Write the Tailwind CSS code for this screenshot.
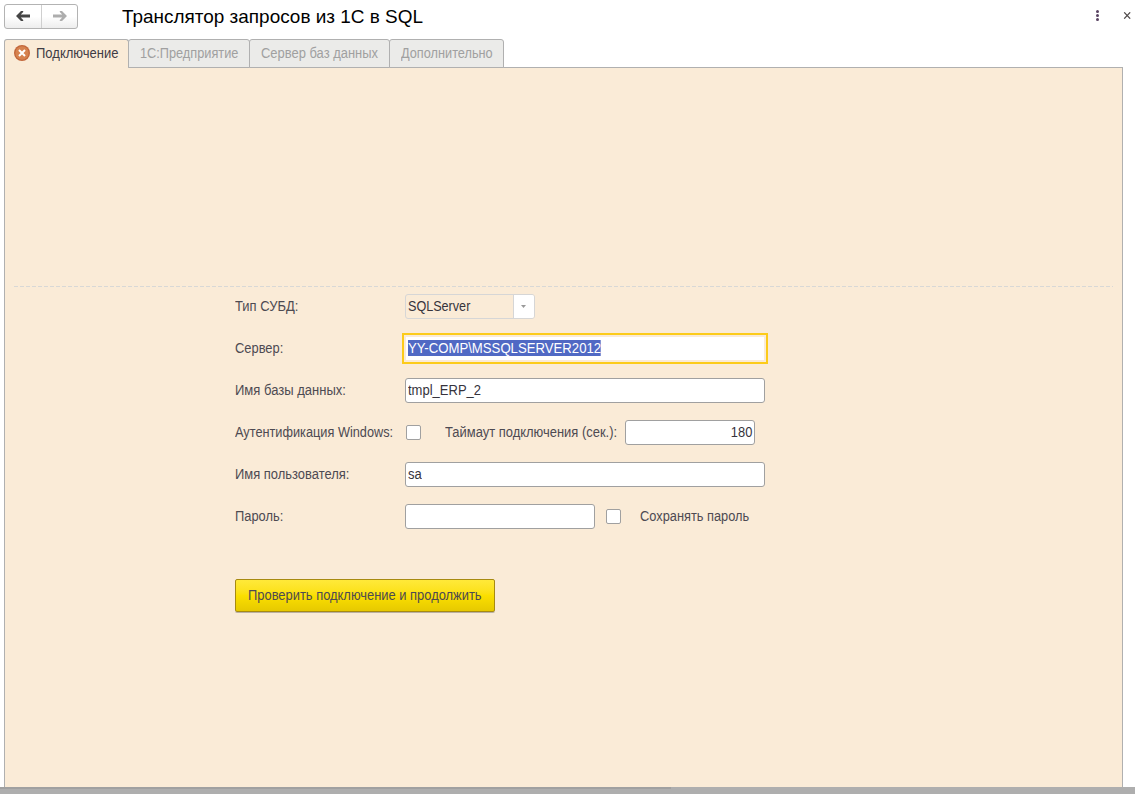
<!DOCTYPE html>
<html lang="ru">
<head>
<meta charset="utf-8">
<title>Транслятор запросов из 1С в SQL</title>
<script src="https://cdn.jsdelivr.net/npm/@tailwindcss/browser@4"></script>
</head>
<body class="h-[794px] w-[1135px] overflow-hidden bg-white font-['Liberation_Sans',Arial,sans-serif] text-[14px] leading-[17px] text-[#4d4a52] whitespace-nowrap flex flex-col">
<header class="h-[39px] shrink-0 flex items-start pl-1 pt-1">
  <div class="flex h-[25px] w-[74px] rounded-[3px] border border-[#b3b3b3] bg-linear-to-b from-white from-50% to-[#ededed]">
    <button class="flex w-[37px] items-center justify-center border-r border-[#cfcfcf]"><svg class="mb-px" width="14" height="10" viewBox="0 0 14 10" fill="#454545"><path d="M0 5 5 0H7.2V1L4.8 3.5H14V6.5H4.8L7.2 9V10H5Z"/></svg></button>
    <button class="flex flex-1 items-center justify-center"><svg class="mb-px" width="14" height="10" viewBox="0 0 14 10" fill="#adadad"><path d="M14 5 9 0H6.8V1L9.2 3.5H0V6.5H9.2L6.8 9V10H9Z"/></svg></button>
  </div>
  <h1 class="ml-[44px] mt-[1px] w-[320px] text-[19px] leading-[24px] text-black"><span class="inline-block origin-left scale-x-[.997]">Транслятор запросов из 1С в SQL</span></h1>
  <svg class="ml-auto mt-[6px]" width="4" height="12" viewBox="0 0 4 12" fill="#594362"><circle cx="2.5" cy="1.5" r="1.5"/><circle cx="2.5" cy="5.5" r="1.5"/><circle cx="2.5" cy="9.5" r="1.5"/></svg>
  <svg class="ml-[24px] mr-[4px] mt-[8px]" width="8" height="7" viewBox="0 0 8 7" stroke="#514c4c" stroke-width="1.2"><path d="M1.2.3 7.2 6.7M7.2.3 1.2 6.7"/></svg>
</header>
<nav class="relative z-10 -mb-px ml-1 flex h-[29px] shrink-0 text-[#a0a0a0]">
  <div class="flex w-[125px] items-center rounded-t-[3px] border border-b-0 border-[#b0b0b0] bg-[#faebd7] pb-px pl-[9px] text-[#3f3c45]">
    <svg class="mr-[6px] mb-px shrink-0" width="16" height="16" viewBox="0 0 16 16"><circle cx="8" cy="8" r="8" fill="#c2663a"/><circle cx="8" cy="8" r="6.7" fill="#d6824f"/><path d="M5 5 11 11M11 5 5 11" stroke="#fff" stroke-width="2"/></svg>
    <span class="origin-left scale-x-[.93]">Подключение</span>
  </div>
  <div class="-ml-px flex w-[122px] items-center rounded-t-[3px] border border-[#b0b0b0] bg-[#ebebe9] pl-[11px]"><span class="origin-left scale-x-[.91]">1С:Предприятие</span></div>
  <div class="-ml-px flex w-[141px] items-center rounded-t-[3px] border border-[#b0b0b0] bg-[#ebebe9] pl-[11px]"><span class="origin-left scale-x-[.925]">Сервер баз данных</span></div>
  <div class="-ml-px flex w-[115px] items-center rounded-t-[3px] border border-[#b0b0b0] bg-[#ebebe9] pl-[11px]"><span class="origin-left scale-x-[.91]">Дополнительно</span></div>
</nav>
<main class="ml-1 flex h-[720px] w-[1119px] shrink-0 flex-col border border-b-0 border-[#b0b0b0] bg-[#faebd7]">
  <svg class="ml-[9px] mt-[218px] shrink-0" width="1099" height="1"><path d="M0 .5H1099" stroke="#d8d8d6" stroke-dasharray="4 2"/></svg>
  <form class="ml-[230px] mt-[7px] flex flex-col gap-[17px]">
    <div class="flex h-[25px] items-center">
      <label class="w-[170px]"><span class="inline-block origin-left scale-x-[.926]">Тип СУБД:</span></label>
      <div class="flex h-[25px] w-[130px] items-center overflow-hidden rounded-[3px] border border-[#d6d6d6] pl-[2px] text-[#36333c]"><div class="flex-1"><span class="inline-block origin-left scale-x-[.9]">SQLServer</span></div>
        <div class="flex h-full w-[21px] items-center justify-center border-l border-[#d6d6d6] bg-white"><svg class="mr-px" width="5" height="3"><path d="M0 0H5L2.5 3Z" fill="#999"/></svg></div></div>
    </div>
    <div class="flex h-[25px] items-center">
      <label class="w-[167px]"><span class="inline-block origin-left scale-x-[.92]">Сервер:</span></label>
      <div class="-my-[3px] h-[31px] w-[366px] border-2 border-[#fccb1a] p-[2px]"><div class="flex h-full items-center bg-white pl-[2px]"><span class="mb-px h-[16px] origin-left scale-x-[.94] bg-[#5069c4] leading-[16px] text-white">YY-COMP\MSSQLSERVER2012</span></div></div>
    </div>
    <div class="flex h-[25px] items-center">
      <label class="w-[170px]"><span class="inline-block origin-left scale-x-[.93]">Имя базы данных:</span></label>
      <div class="flex h-[25px] w-[360px] items-center rounded-[3px] border border-[#a0a0a0] bg-white pl-[2px] text-[#36333c]"><span class="origin-left scale-x-[.93]">tmpl_ERP_2</span></div>
    </div>
    <div class="flex h-[25px] items-center">
      <label class="w-[171px]"><span class="inline-block origin-left scale-x-[.91]">Аутентификация Windows:</span></label>
      <div class="h-[15px] w-[15px] rounded-[2px] border border-[#a0a0a0] bg-white"></div>
      <label class="ml-[24px] w-[180px]"><span class="inline-block origin-left scale-x-[.925]">Таймаут подключения (сек.):</span></label>
      <div class="flex h-[25px] w-[130px] items-center justify-end rounded-[3px] border border-[#a0a0a0] bg-white pr-[2px] text-[#36333c]"><span class="origin-right scale-x-[.92]">180</span></div>
    </div>
    <div class="flex h-[25px] items-center">
      <label class="w-[170px]"><span class="inline-block origin-left scale-x-[.925]">Имя пользователя:</span></label>
      <div class="flex h-[25px] w-[360px] items-center rounded-[3px] border border-[#a0a0a0] bg-white pl-[2px] text-[#36333c]"><span class="origin-left scale-x-[.93]">sa</span></div>
    </div>
    <div class="flex h-[25px] items-center">
      <label class="w-[170px]"><span class="inline-block origin-left scale-x-[.92]">Пароль:</span></label>
      <div class="h-[25px] w-[190px] rounded-[3px] border border-[#a0a0a0] bg-white"></div>
      <div class="ml-[11px] h-[15px] w-[15px] rounded-[2px] border border-[#a0a0a0] bg-white"></div>
      <label class="ml-[19px]"><span class="inline-block origin-left scale-x-[.915]">Сохранять пароль</span></label>
    </div>
    <button type="button" class="mt-[33px] flex h-[33px] w-[260px] items-center rounded-[2px] border border-[#a78a10] bg-linear-to-b from-[#ffe939] via-[#fbdf00] to-[#e6c900] pl-[12px] shadow-[0_1px_0_#b9b0a4]"><span class="origin-left scale-x-[.922]">Проверить подключение и продолжить</span></button>
  </form>
</main>
<footer class="h-[7px] shrink-0 bg-[#aeaeae]"><div class="h-[2px] w-[671px] bg-[#a0a0a0]"></div></footer>
</body>
</html>
